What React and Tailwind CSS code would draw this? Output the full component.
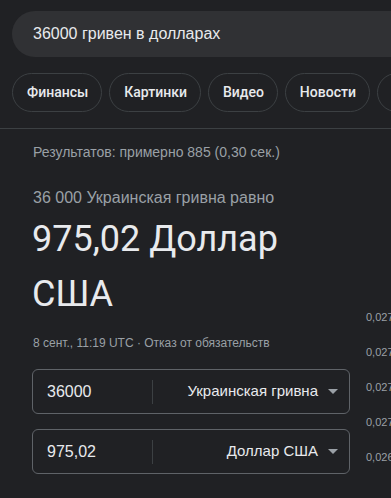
import React from "react";

const chips = ["Финансы", "Картинки", "Видео", "Новости", "Карты"];
const labels = ["0,0277", "0,0275", "0,0273", "0,0271", "0,0269"];

function Arrow() {
  return (
    <svg width="10" height="5" viewBox="0 0 10 5" className="shrink-0">
      <path d="M0 0 L10 0 L5 5 Z" fill="#9aa0a6" />
    </svg>
  );
}

function ConvRow({ value, currency }) {
  return (
    <div className="flex h-[45px] items-center rounded-[6px] border border-[#5f6368] pl-[14px] pr-[11px]">
      <div className="w-[105px] text-[16px] text-[#e8eaed]">{value}</div>
      <div className="h-[24px] w-px bg-[#3c4043]" />
      <div className="flex flex-1 items-center justify-end gap-[10px] text-[15px] text-[#e8eaed]">
        <span>{currency}</span>
        <Arrow />
      </div>
    </div>
  );
}

export default function App() {
  return (
    <div
      className="h-[498px] w-[391px] overflow-hidden bg-[#202124]"
      style={{ fontFamily: '"Liberation Sans", Arial, sans-serif' }}
    >
      <div className="pl-[12px] pt-[11px]">
        <div className="flex h-[46px] w-[420px] items-center rounded-l-full bg-[#303134] pl-[21px] text-[16px] text-[#e8eaed]">
          36000 гривен в долларах
        </div>
      </div>
      <div
        className="flex gap-[7px] overflow-hidden whitespace-nowrap pl-[12px] pt-[16px]"
        style={{ fontFamily: 'Roboto, "Liberation Sans", sans-serif' }}
      >
        {chips.map((c) => (
          <div
            key={c}
            className="flex h-[39px] shrink-0 items-center rounded-full border border-[#3c4043] pl-[14px] pr-[13px] text-[14px] font-medium text-[#e8eaed]"
          >
            {c}
          </div>
        ))}
      </div>
      <div className="mt-[16px] h-px w-full bg-[#3c4043]" />
      <div className="flex">
        <div className="ml-[32px] w-[318px] shrink-0">
          <div className="mt-[13px] pl-px text-[14px] leading-[20px] text-[#9aa0a6]">
            Результатов: примерно 885 (0,30 сек.)
          </div>
          <div className="mt-[24px] pl-px text-[16px] leading-[24px] text-[#9aa0a6]">
            36 000 Украинская гривна равно
          </div>
          <div
            className="mt-[2px] text-[36px] leading-[55px] text-[#e8eaed]"
            style={{ fontFamily: 'Roboto, "Liberation Sans", sans-serif' }}
          >
            975,02 Доллар США
          </div>
          <div className="mt-[13px] pl-px text-[12px] leading-[16px] text-[#9aa0a6]">
            8 сент., 11:19 UTC · Отказ от обязательств
          </div>
          <div className="mt-[18px] flex flex-col gap-[15px]">
            <ConvRow value="36000" currency="Украинская гривна" />
            <ConvRow value="975,02" currency="Доллар США" />
          </div>
        </div>
        <div className="ml-[16px] flex flex-col pt-[171px]">
          {labels.map((l, i) => (
            <div
              key={i}
              className="flex h-[35px] items-center whitespace-nowrap text-[11px] text-[#9aa0a6]"
            >
              {l}
            </div>
          ))}
        </div>
      </div>
    </div>
  );
}
